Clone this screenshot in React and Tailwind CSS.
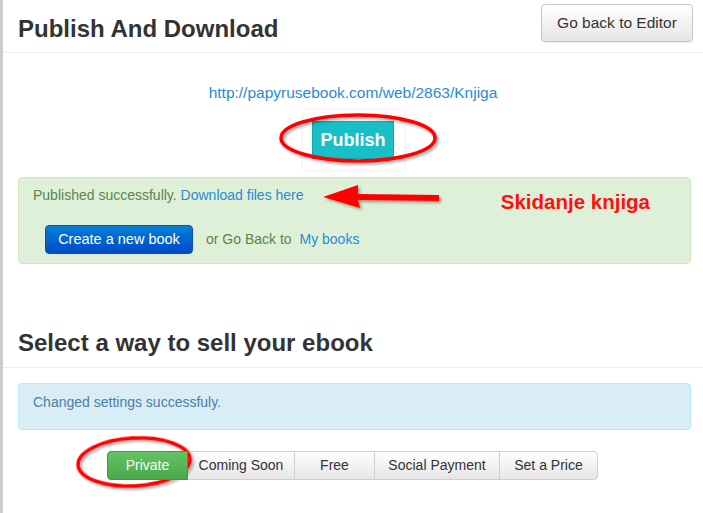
import React from "react";

const SellButton = ({ label, width, active }) => (
  <button
    className={`h-[29px] text-[14px] border -ml-px first:ml-0 first:rounded-l-[4px] last:rounded-r-[4px] ${
      active
        ? "bg-gradient-to-b from-[#62c462] to-[#4aa84a] border-[#3f9a3f] text-white relative z-10"
        : "bg-gradient-to-b from-white to-[#e6e6e6] border-[#cfcfcf] text-[#333]"
    }`}
    style={{ width }}
  >
    {label}
  </button>
);

export default function App() {
  const options = [
    { label: "Private", width: 81, active: true },
    { label: "Coming Soon", width: 108 },
    { label: "Free", width: 81 },
    { label: "Social Payment", width: 126 },
    { label: "Set a Price", width: 99 },
  ];

  return (
    <div className="relative w-[703px] h-[513px] overflow-hidden bg-white border-l-[3px] border-[#cccccc] font-['Liberation_Sans',Arial,sans-serif] text-[#333]">
      {/* header */}
      <div className="flex justify-between items-start h-[53px] border-b border-[#eeeeee] pl-[15px] pr-[10px]">
        <h1 className="mt-[16px] text-[24px] leading-[26px] font-bold text-[#333]">Publish And Download</h1>
        <button className="mt-[4px] h-[38px] w-[152px] text-[15.5px] text-[#333] rounded-[4px] border border-[#c8c8c8] bg-gradient-to-b from-white to-[#e6e6e6] shadow-[0_1px_1px_rgba(0,0,0,0.08)]">
          Go back to Editor
        </button>
      </div>

      <div className="flex flex-col items-center">
        <a className="mt-[30px] text-[15.5px] leading-[20px] text-[#2a8ad3]">http://papyrusebook.com/web/2863/Knjiga</a>
        <div className="mt-[7px] w-[101px] h-[60px] flex items-center justify-center bg-white shadow-[0_0_3px_rgba(0,0,0,0.12)]">
          <button className="w-[82px] h-[38px] bg-[#18bfc6] border border-[#15a9ae] text-white font-bold text-[18px]">
            Publish
          </button>
        </div>
      </div>

      {/* success alert */}
      <div className="ml-[15px] mr-[12px] mt-[7px] h-[87px] rounded-[4px] bg-[#dff0d8] border border-[#d2e6c4] pl-[14px] pt-[7px]">
        <div className="flex items-start pr-[40px]">
          <p className="text-[14px] leading-[20px] text-[#5a8450]">
            Published successfully. <a className="text-[#2a8ad3]">Download files here</a>
          </p>
          <span className="ml-auto mt-[5px] text-[20.5px] leading-[24px] font-bold text-[#ff1010]">Skidanje knjiga</span>
        </div>
        <div className="flex items-center mt-[11px] pl-[12px] gap-[13px]">
          <button className="w-[148px] h-[29px] rounded-[4px] text-white text-[14.5px] bg-gradient-to-b from-[#0a7fd6] to-[#0049c8] border border-[#0a4fb5]">
            Create a new book
          </button>
          <span className="text-[14px] text-[#5a8450]">
            or Go Back to <a className="ml-[4px] text-[#2a8ad3]">My books</a>
          </span>
        </div>
      </div>

      {/* sell section */}
      <h2 className="mt-[66px] pl-[15px] text-[24px] leading-[26px] font-bold text-[#333]">Select a way to sell your ebook</h2>
      <div className="mt-[11px] border-b border-[#eeeeee]" />

      <div className="ml-[15px] mr-[12px] mt-[15px] h-[47px] rounded-[4px] bg-[#d9edf7] border border-[#bce8f1] pl-[14px] pt-[8px]">
        <p className="text-[14px] leading-[20px] text-[#4a7fa3]">Changed settings successfuly.</p>
      </div>

      <div className="mt-[21px] ml-[104px] flex">
        {options.map((o) => (
          <SellButton key={o.label} {...o} />
        ))}
      </div>

      {/* annotations drawn over the page */}
      <svg className="absolute left-[-3px] top-0 pointer-events-none" width="703" height="513">
        <defs>
          <filter id="sh" x="-20%" y="-40%" width="140%" height="180%">
            <feDropShadow dx="2" dy="2" stdDeviation="1.5" floodColor="#000" floodOpacity="0.35" />
          </filter>
        </defs>
        <ellipse cx="358" cy="138" rx="77" ry="23" fill="none" stroke="#ff0000" strokeWidth="3.5" filter="url(#sh)" />
        <ellipse cx="134" cy="462" rx="56" ry="24" fill="none" stroke="#ff0000" strokeWidth="3.5" filter="url(#sh)" transform="rotate(-3 134 462)" />
        <polygon
          points="323,197 358,185 358,194 439,195 439,201 358,200 360,208"
          fill="#ff0000"
          filter="url(#sh)"
        />
      </svg>
    </div>
  );
}
